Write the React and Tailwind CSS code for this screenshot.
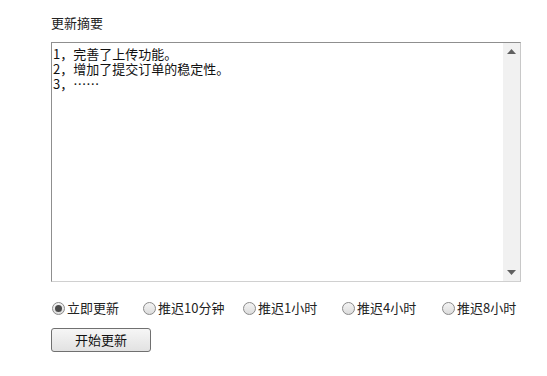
import React from "react";

const font = { fontFamily: '"Microsoft YaHei","Noto Sans CJK SC","Noto Sans",sans-serif' };

function Radio({ checked, label, width }) {
  return (
    <div className={`flex items-center ${width}`}>
      <span className="relative w-[13px] h-[13px] rounded-full border border-[#8a8a8a] bg-gradient-to-b from-[#f4f4f4] to-[#dcdcdc] flex items-center justify-center shrink-0">
        {checked && <span className="w-[7px] h-[7px] rounded-full bg-[#4a4a4a]" />}
      </span>
      <span className="ml-[2px] text-[13px] leading-[16px] text-[#222]">{label}</span>
    </div>
  );
}

export default function App() {
  return (
    <div className="w-[547px] h-[376px] bg-white pl-[51px] pt-[14px]" style={font}>
      <div className="text-[13px] leading-[18px] text-[#222]">更新摘要</div>
      <div className="mt-[10px] w-[470px] h-[240px] border border-[#8f8f8f] border-r-[#c8c8c8] border-b-[#d0d0d0] flex">
        <div className="flex-1 pl-[1px] pt-[3px] text-[13px] leading-[15px] text-[#111]">
          <div>1，完善了上传功能。</div>
          <div>2，增加了提交订单的稳定性。</div>
          <div>3，……</div>
        </div>
        <div className="w-[17px] bg-[#f1f1f1] flex flex-col justify-between items-center py-[4px]">
          <svg width="9" height="5" viewBox="0 0 9 5" className="mt-[2px]"><path d="M0 5 L4.5 0 L9 5 Z" fill="#606060" /></svg>
          <svg width="9" height="5" viewBox="0 0 9 5" className="mb-[2px]"><path d="M0 0 L4.5 5 L9 0 Z" fill="#606060" /></svg>
        </div>
      </div>
      <div className="mt-[18px] flex items-center pl-[1px]">
        <Radio checked label="立即更新" width="w-[91px]" />
        <Radio label="推迟10分钟" width="w-[100px]" />
        <Radio label="推迟1小时" width="w-[99px]" />
        <Radio label="推迟4小时" width="w-[100px]" />
        <Radio label="推迟8小时" width="" />
      </div>
      <button className="mt-[12px] w-[100px] h-[24px] rounded-[3px] border border-[#707070] bg-gradient-to-b from-[#f6f6f6] to-[#e2e2e2] text-[13px] leading-[16px] text-[#111] flex items-center justify-center" style={font}>
        开始更新
      </button>
    </div>
  );
}
